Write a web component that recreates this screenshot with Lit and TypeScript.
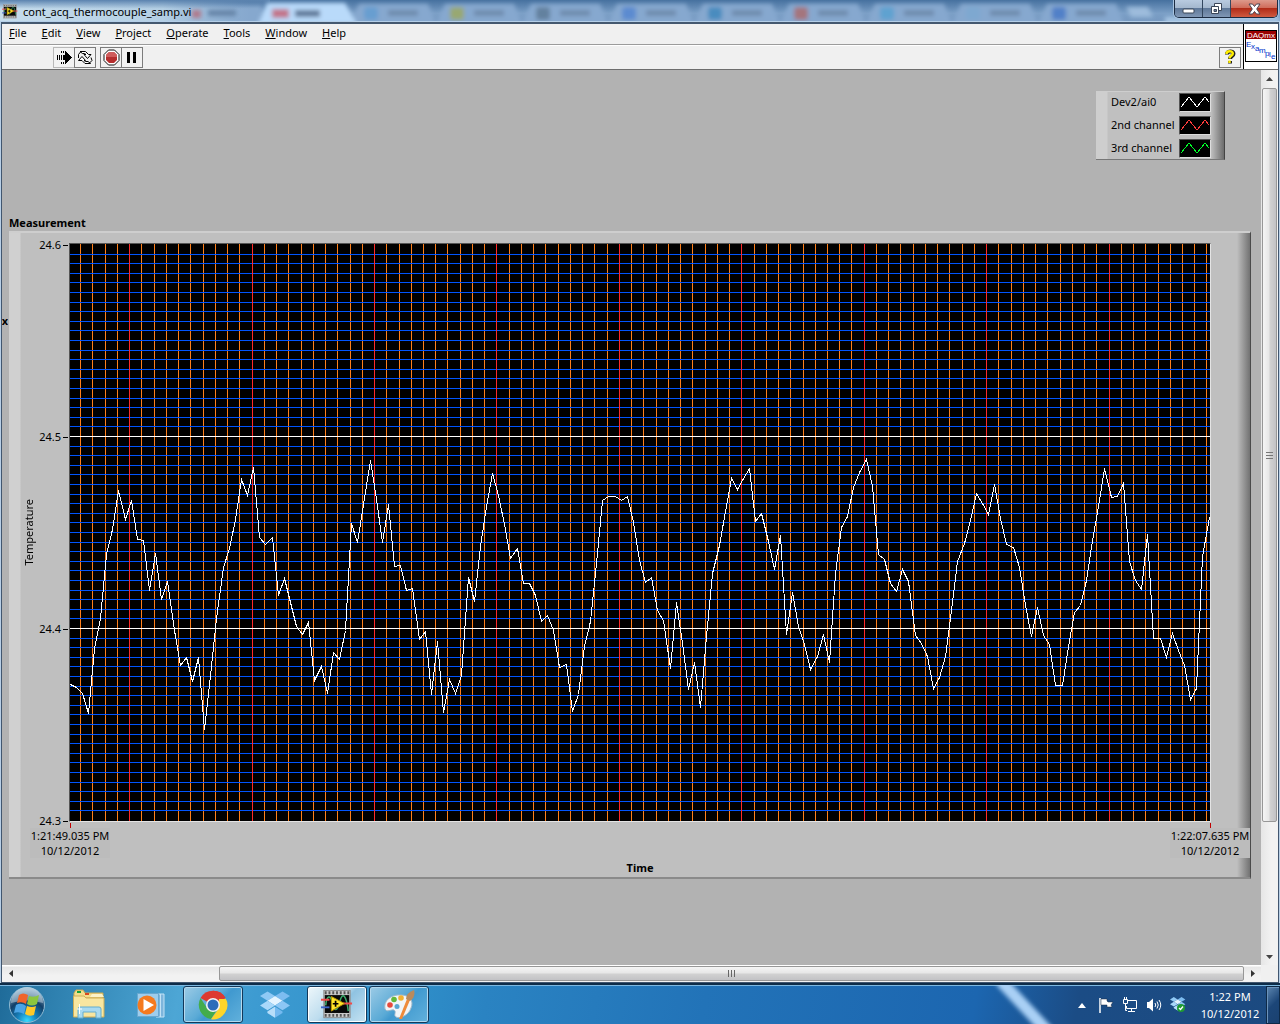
import { LitElement, html, css, svg } from "lit";
import { customElement } from "lit/decorators.js";

/* Thermocouple readings, one every 0.1 s, as raw counts below the top of the recorded range. */
const SAMPLES = [
  733, 741, 760, 821, 625, 535, 343, 267, 151, 238, 181, 297, 301, 451, 340, 478, 424, 570, 676, 653,
  723, 651, 868, 705, 535, 381, 325, 238, 119, 166, 82, 291, 313, 292, 466, 416, 488, 558, 583, 546,
  720, 680, 760, 637, 658, 570, 251, 306, 193, 61, 177, 306, 193, 378, 376, 451, 446, 598, 574, 763,
  604, 817, 718, 760, 706, 412, 484, 320, 200, 101, 166, 253, 354, 325, 430, 430, 467, 543, 527, 570,
  683, 674, 814, 763, 618, 545, 370, 181, 170, 170, 181, 170, 247, 362, 427, 413, 510, 542, 684, 488,
  610, 748, 667, 802, 590, 400, 315, 215, 116, 148, 115, 85, 244, 221, 305, 388, 287, 583, 458, 560,
  612, 687, 650, 584, 667, 400, 262, 228, 142, 97, 59, 140, 343, 358, 430, 454, 388, 425, 585, 610,
  648, 745, 712, 650, 510, 365, 310, 240, 161, 190, 223, 134, 235, 313, 323, 383, 495, 589, 503, 586,
  614, 736, 736, 620, 518, 495, 420, 300, 200, 85, 172, 169, 130, 365, 420, 448, 283, 595, 596, 652,
  581, 630, 677, 778, 745, 350, 232,
];
const PLOT_W = 1140;
const PLOT_H = 577;
const SAMPLE_STEP = (PLOT_W - 1) / (SAMPLES.length - 1);

const traceY = (count: number) => Math.floor(count / 3) + 196;

@customElement("strip-chart")
export class StripChart extends LitElement {
  static styles = css`
    :host { display: block; background: #000; min-height: 0; }
    .plot { display: block; width: 100%; height: 100%; shape-rendering: crispEdges; }
    .line { fill: none; stroke-width: 1; vector-effect: non-scaling-stroke; }
    .minor-x { stroke: #ff7f1a; }
    .major-x { stroke: #ff2a2a; }
    .minor-y { stroke: #0055ff; }
    .white { stroke: #fff; }
  `;

  render() {
    let minorX = "";
    let majorX = "";
    for (let i = -4; i <= 88; i++) {
      const x = Math.round(59.2 + i * 12.242) + 0.5;
      const d = `M${x} 0V${PLOT_H}`;
      if (i % 10 === 0) majorX += d;
      else minorX += d;
    }
    let minorY = "";
    let majorY = "";
    for (let i = 1; i < 60; i++) {
      const d = `M0 ${Math.floor(0.5 + i * 9.6) + 0.5}H${PLOT_W}`;
      if (i % 20 === 0) majorY += d;
      else minorY += d;
    }
    const trace = SAMPLES.map((c, i) => `${Math.floor(i * SAMPLE_STEP) + 0.5},${traceY(c) + 0.5}`).join(" ");
    return html`<svg class="plot" viewBox="0 0 ${PLOT_W} ${PLOT_H}" preserveAspectRatio="none" role="img" aria-label="Temperature over time">
      <path class="line minor-x" d=${minorX}></path>
      <path class="line minor-y" d=${minorY}></path>
      <path class="line major-x" d=${majorX}></path>
      <path class="line white" d=${majorY}></path>
      <polyline class="line white" points=${trace}></polyline>
    </svg>`;
  }
}

const MENUS = ["File", "Edit", "View", "Project", "Operate", "Tools", "Window", "Help"];
const CHANNELS = [
  { name: "Dev2/ai0", color: "#ffffff" },
  { name: "2nd channel", color: "#ff3b3b" },
  { name: "3rd channel", color: "#00ff2a" },
];

const viGlyph = svg`
  <rect x="3" y="0" width="28" height="29" fill="#c9c9c9" stroke="#8b8b8b" stroke-width="1"/>
  <path d="M4 2.500H30M4 26.500H30" stroke="#555" stroke-width="3" stroke-dasharray="2 2"/>
  <rect x="4" y="5" width="26" height="19" fill="#080808"/>
  <path d="M5 16C6 5 10 4 12 13S17 24 20 12S27 6 29 22" fill="none" stroke="#3ba96b" stroke-width="1.600"/>
  <path d="M0 10H9M21 14H33" stroke="#f04a4a" stroke-width="2"/>
  <path d="M0 18H9" stroke="#3c64c8" stroke-width="2"/>
  <path d="M11 6.500V22L25 14Z" fill="#ffe52a" stroke="#b89400" stroke-width="1"/>
  <path d="M15.500 11V17.500M12.500 14.200H18.500" stroke="#000" stroke-width="1.800"/>`;

const dropboxGlyph = svg`
  <path d="M8 0L16 5L8 10L0 5Z" fill="#8fc9f5"/>
  <path d="M24 0L32 5L24 10L16 5Z" fill="#7dbcf0"/>
  <path d="M16 5L24 10L16 15L8 10Z" fill="#e4f4ff"/>
  <path d="M8 10L16 15L8 20L0 15Z" fill="#a9d8fa"/>
  <path d="M24 10L32 15L24 20L16 15Z" fill="#8cc6f4"/>
  <path d="M16 16.500L24 21.500V23L16 28L8 23V21.500Z" fill="#74b9ef"/>
  <path d="M16 16.500V28L8 23V21.500Z" fill="#b7def9"/>`;

@customElement("app-root")
export class AppRoot extends LitElement {
  static styles = css`
    :host {
      display: flex; flex-direction: column; min-height: 100vh; min-width: 760px;
      font: 11px/16px "Noto Sans", "Open Sans", sans-serif; color: #000; background: #b8cfe6;
    }
    * { box-sizing: border-box; }
    button { font: inherit; color: inherit; background: none; border: 0; padding: 0; margin: 0; }
    svg { display: block; }
    .window { flex: 1; display: flex; flex-direction: column; min-height: 0; }

    .titlebar { display: flex; align-items: center; height: 22px; position: relative; overflow: hidden; background: linear-gradient(#46719f, #7b9fc6 60%, #7598c0); }
    .backdrop { position: absolute; inset: 0; width: 100%; height: 22px; }
    .vi-icon { position: relative; margin: 1px 0 0 2px; }
    .title { position: relative; flex: 1; margin: 1px 0 0 5px; font: inherit; }
    .caption-buttons { position: relative; align-self: flex-start; display: flex; height: 18px; margin-right: 2px; border: 1px solid #1b2b42; border-top: 0; border-radius: 0 0 5px 5px; overflow: hidden; box-shadow: 0 0 0 1px #a9c4e0; }
    .caption { width: 28px; height: 17px; display: flex; align-items: center; justify-content: center; background: linear-gradient(#b9cbe0, #a3b6cd 48%, #5f7899 50%, #8097b5); border-right: 1px solid #33475f; }
    .close { width: 46px; border: 0; background: linear-gradient(#dd9a8c, #cf6a58 48%, #b12c18 50%, #cf5a40); }

    .client { flex: 1; display: flex; flex-direction: column; min-height: 0; margin: 0 1px; border: 1px solid #41566f; border-top: 2px solid #44586f; background: #f0f0f0; }
    .bars { display: flex; border-bottom: 1px solid #6d6d6d; height: 46px; }
    .bars-main { flex: 1; display: flex; flex-direction: column; }
    .menubar { display: flex; gap: 1px; height: 21px; border-bottom: 1px solid #9b9b9b; }
    .menu { padding: 0 7px 2px; }
    .toolbar { flex: 1; display: flex; align-items: center; padding: 0 3px 1px 51px; border-top: 1px solid #fff; }
    .tool { width: 22px; height: 21px; border: 1px solid #7c7c7c; display: flex; align-items: center; justify-content: center; background: #f2f2f2; }
    .tool + .tool { margin-left: -1px; }
    .tool.running { border-color: #b8b8b8; }
    .tool.spaced { margin-left: 4px; }
    .tool.help { margin-left: auto; margin-right: -1px; }
    .vi-box { width: 35px; padding: 6px 1px 0; border-left: 1px solid #000; background: #fff; }
    .vi-label { display: block; border: 1px solid #000; height: 32px; }

    .work { flex: 1; display: grid; grid-template-columns: minmax(0, 1fr) 17px; grid-template-rows: minmax(0, 1fr) 17px; min-height: 0; }
    .panel { position: relative; background: #b2b2b2; display: flex; flex-direction: column; padding: 21px 10px 86px 7px; overflow: hidden; }
    .fragment { position: absolute; left: 0; top: 243px; width: 6px; overflow: hidden; font-weight: 700; direction: rtl; }
    .legend { align-self: flex-end; margin-right: 26px; width: 129px; height: 69px; padding: 0 13px 0 15px; border-top: 1px solid #cecece; border-bottom: 1px solid #777; border-right: 1px solid #444;
      background: linear-gradient(90deg, #cecece 0 11px, #c0c0c0 12px calc(100% - 13px), #6c6c6c 100%); }
    .channel { display: flex; align-items: center; justify-content: space-between; height: 20px; margin-bottom: 3px; white-space: nowrap; }
    .swatch { width: 32px; height: 19px; border: 1px solid; border-color: #555 #ddd #ddd #555; background: #000; flex: none; }
    .heading { margin: 55px 0 0; font: inherit; font-weight: 700; }
    .frame { flex: 1; display: grid; grid-template-columns: 60px minmax(0, 1fr) 39px; grid-template-rows: minmax(0, 1fr) 55px; padding-top: 10px; min-height: 200px;
      border-top: 2px solid #cecece; border-bottom: 2px solid #8a8a8a; border-right: 1px solid #4a4a4a;
      background: linear-gradient(90deg, #d0d0d0 0 11px, #bfbfbf 12px calc(100% - 13px), #727272 100%); }
    .y-axis { display: flex; align-items: center; padding-left: 12px; }
    .y-title { writing-mode: vertical-rl; transform: rotate(180deg); }
    .y-ticks { flex: 1; align-self: stretch; display: flex; flex-direction: column; justify-content: space-between; align-items: flex-end; margin: -6px 1px -7px 0; }
    .tick { display: flex; align-items: center; gap: 2px; }
    .tick::after { content: ""; width: 5px; height: 1px; background: #000; }
    .plot { border: 1px solid; border-color: #555 #e4e4e4 #e4e4e4 #555; }
    .x-axis { grid-column: 2; }
    .x-ticks { display: flex; justify-content: space-between; margin: 0 -39px; }
    .stamp { width: 80px; text-align: center; line-height: 15px; white-space: nowrap; background: linear-gradient(transparent 0 6px, #bcbcbc 6px); }
    .stamp::before { content: ""; display: block; width: 1px; height: 5px; margin: 1px auto 0; background: #c00000; }
    .x-title { text-align: center; font-weight: 700; line-height: 20px; }

    .scroll { display: flex; background: linear-gradient(90deg, #e6e6e6, #f2f2f2 60%); }
    .scroll.vertical { flex-direction: column; }
    .scroll.horizontal { background: linear-gradient(#fff 0 1px, #e6e6e6 2px, #f2f2f2 60%); }
    .arrow { width: 17px; height: 17px; flex: none; display: flex; align-items: center; justify-content: center; }
    .thumb { border: 1px solid #979797; border-radius: 2px; display: flex; align-items: center; justify-content: center; }
    .vertical .thumb { flex: 735; margin: 1px 1px 0; background: linear-gradient(90deg, #f5f5f5, #e6e6e6 48%, #d2d2d2 52%, #c2c2c5); }
    .horizontal .thumb { flex: 1024; margin: 1px 0; background: linear-gradient(#f5f5f5, #e6e6e6 48%, #d2d2d2 52%, #c2c2c5); }
    .v-rest { flex: 126; }
    .h-rest { flex: 200; }

    .taskbar { display: flex; height: 41px; padding-top: 1px; border-top: 2px solid #0e2c48; position: relative; overflow: hidden;
      background: linear-gradient(100deg, #1f6b99 0, #2d7fae 4%, #4da6d5 14%, #3d9bd1 20%, #2f8fc9 32%, #2a83c2 38%, #2273b8 55%, #1c66b0 76%, #1b4c85 84%, #1c4a80 100%); }
    .taskbar::before { content: ""; position: absolute; left: 0; right: 0; top: 0; height: 1px; background: #7db8e0; }
    .glow { position: absolute; right: 249px; top: -14px; width: 12px; height: 72px; background: #a9d0f5; transform: rotate(-43deg); filter: blur(2px); }
    .start { width: 59px; padding: 0 0 2px 8px; position: relative; }
    .task { position: relative; width: 60px; height: 37px; margin-right: 2px; display: flex; align-items: center; justify-content: center; border: 1px solid transparent; border-radius: 3px; }
    .task.open { border-color: #12385a; box-shadow: inset 0 0 0 1px #b5d9ee; background: linear-gradient(135deg, #9ccbe6, #5aaad6 45%, #4099cf 55%, #62b1dc); }
    .task.active { background: linear-gradient(135deg, #eef7fb, #bcdcee 45%, #8fc3e2 55%, #c6e3f2); box-shadow: inset 0 0 0 1px #fff; }
    .tray { position: relative; margin-left: auto; display: flex; align-items: center; color: #fff; }
    .tray-icon { width: 24px; height: 24px; display: flex; align-items: center; justify-content: center; }
    .clock { width: 76px; padding-left: 4px; text-align: center; line-height: 17px; white-space: nowrap; }
    .desktop { position: relative; width: 14px; height: 38px; border: 1px solid #0d2947; box-shadow: inset 1px 1px 0 #6c93bb; background: linear-gradient(135deg, #5d86b0, #1c4678 50%, #1a4170); }
  `;

  private backdrop() {
    const icons = ["#5b9ad0", "#a0a84a", "#55708a", "#4a7fd0", "#4a7fd0", "#2f80b8", "#b0605a", "#4f9fd0", "#7aa8d0", "#3a6fc4"];
    icons.splice(3, 1);
    return html`<svg class="backdrop" viewBox="0 0 1280 22" preserveAspectRatio="none" aria-hidden="true">
      <defs>
        <filter id="soft" x="-20%" y="-50%" width="140%" height="200%"><feGaussianBlur stdDeviation="2"></feGaussianBlur></filter>
        <linearGradient id="left"><stop offset="0" stop-color="#c5dcec"></stop><stop offset="0.65" stop-color="#b4cfe4"></stop><stop offset="1" stop-color="#9dbbd9" stop-opacity="0"></stop></linearGradient>
        <linearGradient id="top" x2="0" y2="1"><stop offset="0" stop-color="#5b83af"></stop><stop offset="0.4" stop-color="#5b83af" stop-opacity="0"></stop></linearGradient>
      </defs>
      <g filter="url(#soft)">
        <rect x="150" y="4" width="112" height="24" fill="#86a8ce"></rect>
      </g>
      <rect x="0" y="0" width="250" height="22" fill="url(#left)"></rect>
      <rect x="0" y="0" width="270" height="22" fill="url(#top)"></rect>
      <g filter="url(#soft)">
        <rect x="192" y="10" width="9" height="8" fill="#b07a8c"></rect><rect x="208" y="10" width="28" height="6" fill="#6685a8"></rect>
        ${icons.map((c, i) => {
          const x = 350 + i * 86;
          return svg`<path d="M${x} 24L${x + 9} 4H${x + 78}L${x + 86} 24Z" fill="#86a8cf"/>
            <rect x="${x + 14}" y="7" width="14" height="13" rx="3" fill="${c}" opacity=".7"/>
            <rect x="${x + 38}" y="10" width="30" height="6" fill="#6f8cae"/>`;
        })}
        <path d="M258 24L267 3H345L357 24Z" fill="#b9dafa"></path>
        <rect x="272" y="9" width="17" height="9" fill="#c2758a"></rect>
        <rect x="295" y="10" width="25" height="7" fill="#60799a"></rect>
        <path d="M1126 7H1148L1153 17H1131Z" fill="#9dbcdc"></path>
        <rect x="1165" y="17" width="115" height="6" fill="#a9c8e6"></rect>
      </g>
      <rect x="0" y="21" width="1280" height="1" fill="#b5cfe8"></rect>
    </svg>`;
  }

  private titlebar() {
    return html`<header class="titlebar">
      ${this.backdrop()}
      <svg class="vi-icon" width="16" height="15" viewBox="0 0 34 30" aria-hidden="true">${viGlyph}</svg>
      <h1 class="title">cont_acq_thermocouple_samp.vi</h1>
      <div class="caption-buttons">
        <button class="caption" aria-label="Minimize"><svg width="13" height="15"><rect x="1" y="8" width="11" height="4" rx="1" fill="#fff" stroke="#3b4658"/></svg></button>
        <button class="caption" aria-label="Restore"><svg width="13" height="13"><path d="M4.500 1.500H11.500V8.500H4.500Z" fill="#fff" stroke="#3b4658"/><path d="M1.500 4.500H8.500V11.500H1.500Z" fill="#fff" stroke="#3b4658"/><path d="M4 7.500H6.500V9.500H4Z" fill="#6c819d" stroke="#3b4658"/></svg></button>
        <button class="caption close" aria-label="Close"><svg width="13" height="12" viewBox="0 0 13 12"><path d="M1 1H4.500L6.500 3.500L8.500 1H12L8.700 6L12 11H8.500L6.500 8.500L4.500 11H1L4.300 6Z" fill="#fff" stroke="#4a4450"/></svg></button>
      </div>
    </header>`;
  }

  private bars() {
    return html`<div class="bars">
      <div class="bars-main">
        <nav class="menubar" aria-label="Main">${MENUS.map((m) => html`<button class="menu"><u>${m[0]}</u>${m.slice(1)}</button>`)}</nav>
        <div class="toolbar">
          <button class="tool running" aria-label="Running"><svg width="16" height="15" shape-rendering="crispEdges"><path d="M1.500 5V10M3.500 5V10M5.500 5V10M5.500 1V3M7.500 1V3M5.500 12V14M7.500 12V14" stroke="#000"/><path d="M7 5H9V1H10L16 7.500L10 14H9V10H7Z" fill="#000"/></svg></button>
          <button class="tool" aria-label="Run continuously"><svg width="16" height="15" fill="#fff" stroke="#000"><path d="M3 1.500H8.500L11.500 4.500H14L10.500 8.500L7 4.500H9L7.500 3.500H5.500Z"/><path d="M13.500 13.500H8L5 10.500H1.500L5 6.500L8.500 10.500H7L8.500 11.500H11Z"/><path d="M3.500 2L1.500 4.500V8M12.500 13L15 10.500L14 7.500" fill="none"/></svg></button>
          <button class="tool spaced" aria-label="Abort"><svg width="17" height="17" viewBox="0 0 17 17"><path d="M5.500 1H11.500L16 5.500V11.500L11.500 16H5.500L1 11.500V5.500Z" fill="#fff" stroke="#111"/><path d="M6 3H11L14 6V11L11 14H6L3 11V6Z" fill="#b52e2e"/><path d="M6 3H11L14 6V8H3V6Z" fill="#cf5c5c"/></svg></button>
          <button class="tool" aria-label="Pause"><svg width="12" height="11"><path d="M1 0H4V11H1ZM7 0H10V11H7Z" fill="#000"/></svg></button>
          <button class="tool help" aria-label="Context help"><svg width="12" height="16" viewBox="0 0 12 16"><path d="M3 5.500C3 1.500 9.500 1.500 9.500 4.800C9.500 7.300 6 7 6 10M6 12V14.500" fill="none" stroke="#222" stroke-width="4"/><path d="M2.500 5C2.500 1.300 8.800 1.300 8.800 4.500C8.800 7 5.500 6.500 5.500 9.500M5.500 11.500V14" fill="none" stroke="#ffee00" stroke-width="2.500"/></svg></button>
        </div>
      </div>
      <div class="vi-box" aria-label="DAQmx Example">
        <svg class="vi-label" width="32" height="32" viewBox="0 0 30 30" font-family="Liberation Sans, sans-serif" font-size="8">
          <rect width="30" height="8" fill="#9a0000"/><text x="1" y="7" fill="#fff" font-size="8">DAQmx</text>
          <g fill="#0033cc"><text x="0" y="16">E</text><text x="5" y="18">x</text><text x="9" y="20">a</text><text x="13" y="22">m</text><text x="19" y="25">p</text><text x="23" y="26">l</text><text x="25" y="28">e</text></g>
        </svg>
      </div>
    </div>`;
  }

  private panel() {
    return html`<main class="panel">
      <span class="fragment">x</span>
      <div class="legend">
        ${CHANNELS.map((c) => html`<div class="channel"><span>${c.name}</span><svg class="swatch" viewBox="0 0 30 17"><path d="M1 13L9 3L17 13L25 3L29 8" fill="none" stroke=${c.color} shape-rendering="crispEdges"></path></svg></div>`)}
      </div>
      <h2 class="heading">Measurement</h2>
      <section class="frame">
        <div class="y-axis">
          <span class="y-title">Temperature</span>
          <div class="y-ticks">${["24.6", "24.5", "24.4", "24.3"].map((t) => html`<span class="tick">${t}</span>`)}</div>
        </div>
        <strip-chart class="plot"></strip-chart>
        <div class="x-axis">
          <div class="x-ticks"><div class="stamp">1:21:49.035 PM<br>10/12/2012</div><div class="stamp">1:22:07.635 PM<br>10/12/2012</div></div>
          <div class="x-title">Time</div>
        </div>
      </section>
    </main>`;
  }

  private taskbar() {
    return html`<footer class="taskbar">
      <div class="glow"></div>
      <button class="start" aria-label="Start"><svg width="38" height="38" viewBox="0 0 38 38">
        <defs><radialGradient id="orb" cx=".5" cy=".95" r=".9"><stop offset="0" stop-color="#35dcff"/><stop offset=".3" stop-color="#1783bd"/><stop offset=".65" stop-color="#123f68"/><stop offset="1" stop-color="#8fb0c8"/></radialGradient></defs>
        <circle cx="19" cy="19" r="17.500" fill="url(#orb)" stroke="#8fbad2"/>
        <path d="M3 17A16 16 0 0 1 35 17Q19 12 3 17Z" fill="#d8e6f0" opacity=".45"/>
        <path d="M11 9Q15 6 20 9L18 18Q14 15 9 17Z" fill="#f0642a"/><path d="M21 10Q26 12 31 9L29 18Q24 21 19 18Z" fill="#8cc63e"/>
        <path d="M8 19Q13 16 18 20L16 28Q11 25 6 27Z" fill="#4aa4e6"/><path d="M19 20Q24 22 28 20L26 29Q21 31 17 28Z" fill="#ffc928"/>
      </svg></button>
      <button class="task" aria-label="Windows Explorer"><svg width="34" height="32" viewBox="0 0 34 32">
        <path d="M2 4L4 1H11L13 4H31V9H2Z" fill="#f4dd8a" stroke="#c9a850"/><path d="M5 2H9V4H5Z" fill="#18a038"/><path d="M13 4H17V6H13Z" fill="#d84820"/><path d="M22 6H26V8H22Z" fill="#3a90e0"/>
        <path d="M1.500 7H12L14 9H32V28H1.500Z" fill="#f8e6a0" stroke="#cfae58"/><path d="M18 8L20 5H30L32 8" fill="#fbf2c8"/>
        <path d="M6 29V20Q6 18 8 18H27Q29 18 29 20V29H24V23H11V29Z" fill="#a9daf0" stroke="#62add0"/><path d="M5 20H10M7.500 15V25" stroke="#fff"/>
      </svg></button>
      <button class="task" aria-label="Media Player"><svg width="30" height="26" viewBox="0 0 30 26">
        <path d="M20 2H28V25H20Z" fill="#7db5dc" stroke="#c2e2f5"/><path d="M24.500 2V25" stroke="#c2e2f5"/><path d="M1.500 1.500H22.500V24.500H1.500Z" fill="#9dcdec" stroke="#68a8d0"/>
        <circle cx="11" cy="13" r="9.500" fill="#f47a1f"/><path d="M7.500 7V19L18 13Z" fill="#fff"/>
      </svg></button>
      <button class="task open" aria-label="Chrome"><svg width="30" height="30" viewBox="0 0 30 30">
        <path d="M15 15L2.500 8A14.300 14.300 0 0 1 27.500 8Z" fill="#dd3a30"/><path d="M2.500 8A14.300 14.300 0 0 0 13 29L20 18L9 18Z" fill="#43ac4b"/><path d="M27.500 8A14.300 14.300 0 0 1 13 29.200L21 18V9H27.500Z" fill="#fdd52a"/><path d="M15 8H27.500A14.300 14.300 0 0 0 15 .7Z" fill="#dd3a30"/>
        <circle cx="15" cy="15" r="7" fill="#f4f4f4"/><circle cx="15" cy="15" r="5.500" fill="#2c6cba"/>
      </svg></button>
      <button class="task" aria-label="Dropbox"><svg width="30" height="27" viewBox="0 0 32 28">${dropboxGlyph}</svg></button>
      <button class="task open active" aria-label="LabVIEW"><svg width="32" height="29" viewBox="0 0 34 30">${viGlyph}</svg></button>
      <button class="task open" aria-label="Paint"><svg width="32" height="31" viewBox="0 0 32 31">
        <path d="M2 20C0 12 8 5 18 6C27 6 31 12 28 19C26 26 17 30 13 28C10 26 14 23 11 21C8 20 4 24 2 20Z" fill="#f1f5f8" stroke="#9fb9cb"/>
        <circle cx="7" cy="16" r="2.800" fill="#e84a3c"/><circle cx="11" cy="10.500" r="2.800" fill="#62b83c"/><circle cx="18" cy="9" r="2.800" fill="#f2b233"/><circle cx="14" cy="17.500" r="2.500" fill="#5aa6d2"/>
        <path d="M16 30L24 10L27 11L19 30Z" fill="#ee8a3a"/><path d="M23 10Q23 4 31 1Q33 8 27 12Z" fill="#b98a5c"/>
      </svg></button>
      <div class="tray">
        <button class="tray-icon" aria-label="Show hidden icons"><svg width="8" height="5"><path d="M0 5L4 0L8 5Z" fill="#fff"/></svg></button>
        <button class="tray-icon" aria-label="Action Center"><svg width="16" height="16"><path d="M2 1V16" stroke="#fff" stroke-width="1.500"/><path d="M3 2H9V4L10 5H15L13 8L14 10H9V8H3Z" fill="#fff" stroke="#1a2a40" stroke-width=".5"/></svg></button>
        <button class="tray-icon" aria-label="Network"><svg width="16" height="16" fill="none" stroke="#fff"><path d="M6 3.500H14.500V11.500H4.500V9M9.500 12V14M6 14.500H13"/><path d="M1.500 2.500H5.500V6.500H1.500ZM2.500 0V2M4.500 0V2M3.500 7V13.500H5"/></svg></button>
        <button class="tray-icon" aria-label="Volume"><svg width="16" height="16"><path d="M1 5H3L7 1.500V14.500L3 11H1Z" fill="#fff"/><path d="M9 6Q10.500 8 9 10M11 4.500Q13.500 8 11 11.500M13 3Q16.500 8 13 13" fill="none" stroke="#fff"/></svg></button>
        <button class="tray-icon" aria-label="Dropbox status"><svg width="16" height="16" viewBox="0 0 16 16"><g transform="scale(.48)">${dropboxGlyph}</g><circle cx="11" cy="11" r="4" fill="#1f9a34"/><path d="M9 11L10.500 12.500L13 9.500" fill="none" stroke="#fff" stroke-width="1.300"/></svg></button>
        <time class="clock">1:22 PM<br>10/12/2012</time>
      </div>
      <button class="desktop" aria-label="Show desktop"></button>
    </footer>`;
  }

  render() {
    return html`
      <div class="window">
        ${this.titlebar()}
        <div class="client">
          ${this.bars()}
          <div class="work">
            ${this.panel()}
            <div class="scroll vertical" role="scrollbar" aria-orientation="vertical" aria-valuenow="0">
              <button class="arrow" aria-label="Scroll up"><svg width="7" height="4"><path d="M0 4L3.500 0L7 4Z" fill="#444"/></svg></button>
              <div class="thumb"><svg width="8" height="9" shape-rendering="crispEdges"><path d="M0 1.500H7M0 4.500H7M0 7.500H7" stroke="#777"/></svg></div>
              <div class="v-rest"></div>
              <button class="arrow" aria-label="Scroll down"><svg width="7" height="4"><path d="M0 0H7L3.500 4Z" fill="#444"/></svg></button>
            </div>
            <div class="scroll horizontal" role="scrollbar" aria-orientation="horizontal" aria-valuenow="100">
              <button class="arrow" aria-label="Scroll left"><svg width="4" height="7"><path d="M4 0V7L0 3.500Z" fill="#333"/></svg></button>
              <div class="h-rest"></div>
              <div class="thumb"><svg width="9" height="8" shape-rendering="crispEdges"><path d="M1.500 0V7M4.500 0V7M7.500 0V7" stroke="#666"/></svg></div>
              <button class="arrow" aria-label="Scroll right"><svg width="4" height="7"><path d="M0 0V7L4 3.500Z" fill="#333"/></svg></button>
            </div>
          </div>
        </div>
      </div>
      ${this.taskbar()}
    `;
  }
}
